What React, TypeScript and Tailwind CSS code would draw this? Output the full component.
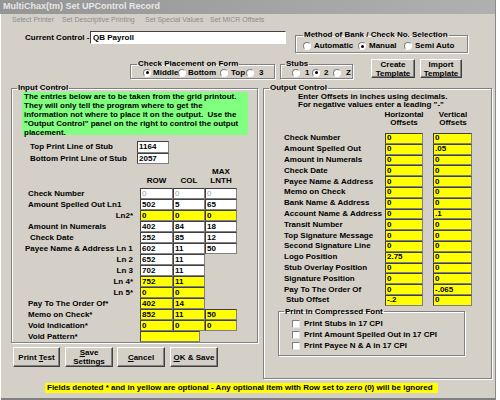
import React from "react";

const fs =
  "border border-[#808080] shadow-[inset_1px_1px_0_#ffffff,1px_1px_0_#ffffff] min-w-0 p-0";
const lg = "px-[1px] text-[8px] leading-[10px] font-bold";
const btn =
  "flex flex-col items-center justify-center bg-[#d4d0c8] border border-t-white border-l-white border-r-[#404040] border-b-[#404040] shadow-[inset_-1px_-1px_0_#808080] text-[8px] leading-[9px] font-bold text-black";

function Radio({ on }: { on?: boolean }) {
  return (
    <span className="flex h-[8px] w-[8px] shrink-0 items-center justify-center rounded-full border border-t-[#808080] border-l-[#808080] border-r-white border-b-white bg-white">
      {on && <span className="h-[3px] w-[3px] rounded-full bg-black" />}
    </span>
  );
}

function Box({ v, w, y, gray }: { v: string; w: string; y?: boolean; gray?: boolean }) {
  return (
    <div
      className={`h-full ${w} ${y ? "bg-[#ffff00]" : "bg-white"} border border-t-[#404040] border-l-[#404040] border-r-[#808080] border-b-[#808080] pl-[1px] flex items-center overflow-hidden text-[8px] ${
        gray ? "text-[#a0a0a0] font-normal" : "text-black font-bold"
      }`}
    >
      {v}
    </div>
  );
}

type InRow = { l: string; v: string[]; r?: boolean; y?: boolean; gray?: boolean; pl?: string };

const inRows: InRow[] = [
  { l: "Check Number", v: ["0", "0", "0"], gray: true },
  { l: "Amount Spelled Out Ln1", v: ["502", "5", "65"] },
  { l: "Ln2*", r: true, y: true, v: ["0", "0", "0"] },
  { l: "Amount in Numerals", v: ["402", "84", "18"] },
  { l: "Check Date", v: ["252", "85", "12"], pl: "pl-[18px]" },
  { l: "Payee Name & Address Ln 1", v: ["602", "11", "50"], pl: "pl-[13px]" },
  { l: "Ln 2", r: true, v: ["652", "11"] },
  { l: "Ln 3", r: true, v: ["702", "11"] },
  { l: "Ln 4*", r: true, y: true, v: ["752", "11"] },
  { l: "Ln 5*", r: true, y: true, v: ["0", "0"] },
  { l: "Pay To The Order Of*", y: true, v: ["402", "14"] },
  { l: "Memo on Check*", y: true, v: ["852", "11", "50"] },
  { l: "Void Indication*", y: true, v: ["0", "0", "0"] },
];

const colW = ["w-[33px]", "w-[32px]", "w-[32px]"];

const outRows: [string, string, string][] = [
  ["Check Number", "0", "0"],
  ["Amount Spelled Out", "0", ".05"],
  ["Amount in Numerals", "0", "0"],
  ["Check Date", "0", "0"],
  ["Payee Name & Address", "0", "0"],
  ["Memo on Check", "0", "0"],
  ["Bank Name & Address", "0", "0"],
  ["Account Name & Address", "0", ".1"],
  ["Transit Number", "0", "0"],
  ["Top Signature Message", "0", "0"],
  ["Second Signature Line", "0", "0"],
  ["Logo Position", "2.75", "0"],
  ["Stub Overlay Position", "0", "0"],
  ["Signature Position", "0", "0"],
  ["Pay To The Order Of", "0", "-.065"],
  ["Stub Offset", "-.2", "0"],
];

export default function App() {
  return (
    <div className="w-[500px] h-[400px] bg-[#d4d0c8] font-['Liberation_Sans',Arial,sans-serif] text-black text-[8px] overflow-hidden flex flex-col shadow-[inset_-4px_0_0_#ffffff,inset_-5px_0_0_#8a8a8a,inset_1px_0_0_#ffffff,inset_0_-2px_0_#808080]">
      {/* title */}
      <div className="h-[14px] bg-linear-to-r from-[#959595] to-[#b0b0b0] flex items-center pl-[3px] text-[9px] font-bold text-[#e8e8e8] mr-[5px]">
        MultiChax(tm) Set UPControl Record
      </div>
      {/* menu */}
      <div className="h-[13px] flex items-center pl-[12px] text-[7px] text-[#8c8c8c] whitespace-nowrap">
        <span className="w-[50px] shrink-0">Select Printer</span>
        <span className="w-[83px] shrink-0">Set Descriptive Printing</span>
        <span className="w-[65px] shrink-0">Set Special Values</span>
        <span>Set MICR Offsets</span>
      </div>

      {/* current control + method */}
      <div className="h-[30px] flex items-start">
        <div className="flex items-center mt-[4px] h-[13px] ml-[25px]">
          <span className="w-[65px] font-bold">Current Control -</span>
          <div className="w-[196px] h-[13px] bg-white border border-t-[#404040] border-l-[#404040] border-r-white border-b-white flex items-center pl-[2px] font-bold">
            QB Payroll
          </div>
        </div>
        <fieldset className={`${fs} ml-[9px] mt-[3px] w-[173px] h-[23px]`}>
          <legend className={`${lg} ml-[7px]`}>Method of Bank / Check No. Selection</legend>
          <div className="flex items-center h-[12px] font-bold">
            <div className="flex items-center gap-[3px] ml-[7px] w-[55px]">
              <Radio />
              <span>Automatic</span>
            </div>
            <div className="flex items-center gap-[3px] w-[46px]">
              <Radio on />
              <span>Manual</span>
            </div>
            <div className="flex items-center gap-[3px]">
              <Radio />
              <span>Semi Auto</span>
            </div>
          </div>
        </fieldset>
      </div>

      {/* placement + stubs + template buttons */}
      <div className="h-[26px] flex items-start">
        <fieldset className={`${fs} ml-[130px] mt-[2px] w-[145px] h-[20px]`}>
          <legend className={`${lg} ml-[6px]`}>Check Placement on Form</legend>
          <div className="flex items-center h-[9px] -mt-[1px] font-bold">
            <div className="flex items-center gap-[2px] ml-[12px] w-[35px]">
              <Radio on />
              <span>Middle</span>
            </div>
            <div className="flex items-center gap-[2px] w-[42px]">
              <Radio />
              <span>Bottom</span>
            </div>
            <div className="flex items-center gap-[3px] w-[26px]">
              <Radio />
              <span>Top</span>
            </div>
            <div className="flex items-center gap-[5px]">
              <Radio />
              <span>3</span>
            </div>
          </div>
        </fieldset>
        <fieldset className={`${fs} ml-[5px] mt-[2px] w-[73px] h-[20px]`}>
          <legend className={`${lg} ml-[4px]`}>Stubs</legend>
          <div className="flex items-center h-[9px] -mt-[1px] font-bold">
            <div className="flex items-center gap-[5px] ml-[11px] w-[20px]">
              <Radio />
              <span>1</span>
            </div>
            <div className="flex items-center gap-[4px] w-[21px]">
              <Radio on />
              <span>2</span>
            </div>
            <div className="flex items-center gap-[5px]">
              <Radio />
              <span>Z</span>
            </div>
          </div>
        </fieldset>
        <div className={`${btn} ml-[18px] mt-[2px] w-[44px] h-[19px]`}>
          <span>Create</span>
          <span>Template</span>
        </div>
        <div className={`${btn} ml-[5px] mt-[2px] w-[42px] h-[19px]`}>
          <span>Import</span>
          <span>Template</span>
        </div>
      </div>

      {/* main panels */}
      <div className="h-[296px] flex items-start">
        <div className="ml-[11px] w-[247px] flex flex-col">
          <fieldset className={`${fs} h-[260px]`}>
            <legend className={`${lg} ml-[5px]`}>Input Control</legend>
            <div className="ml-[10px] -mt-[1px] w-[226px] h-[43px] bg-[#80ff80] pl-[2px] text-[8px] leading-[9px] font-bold whitespace-nowrap">
              The entries below are to be taken from the grid printout.
              <br />
              They will only tell the program where to get the
              <br />
              information not where to place it on the output.&nbsp; Use the
              <br />
              "Output Control" panel on the right to control the output
              <br />
              placement.
            </div>
            <div className="mt-[6px] flex flex-col font-bold">
              <div className="flex h-[12px] items-center">
                <span className="w-[125px] pl-[18px]">Top Print Line of Stub</span>
                <Box v="1164" w="w-[32px]" />
              </div>
              <div className="flex h-[11px] items-center">
                <span className="w-[125px] pl-[18px]">Bottom Print Line of Stub</span>
                <Box v="2057" w="w-[32px]" />
              </div>
            </div>
            <div className="h-[24px] pt-[3px] flex flex-col font-bold leading-[9px]">
              <div className="flex">
                <span className="w-[193px]" />
                <span className="w-[32px] text-center">MAX</span>
              </div>
              <div className="flex">
                <span className="w-[128px]" />
                <span className="w-[33px] text-center">ROW</span>
                <span className="w-[32px] text-center">COL</span>
                <span className="w-[32px] text-center">LNTH</span>
              </div>
            </div>
            {inRows.map((r) => (
              <div key={r.l} className="flex h-[11px] items-center font-bold">
                <span className={`w-[128px] whitespace-nowrap ${r.r ? "text-right pr-[7px]" : r.pl ?? "pl-[16px]"}`}>
                  {r.l}
                </span>
                {r.v.map((v, i) => (
                  <Box key={i} v={v} w={colW[i]} y={r.y} gray={r.gray} />
                ))}
              </div>
            ))}
            <div className="flex h-[11px] items-center font-bold">
              <span className="w-[128px] pl-[16px]">Void Pattern*</span>
              <Box v="" w="w-[60px]" y />
            </div>
          </fieldset>
          <div className="mt-[4px] h-[20px] flex">
            <div className={`${btn} ml-[2px] w-[47px] h-[20px]`}>
              <span>
                Print <span className="underline">T</span>est
              </span>
            </div>
            <div className={`${btn} ml-[5px] w-[48px] h-[20px]`}>
              <span>
                <span className="underline">S</span>ave
              </span>
              <span>Settings</span>
            </div>
            <div className={`${btn} ml-[4px] w-[48px] h-[20px]`}>
              <span>
                <span className="underline">C</span>ancel
              </span>
            </div>
            <div className={`${btn} ml-[5px] w-[48px] h-[20px]`}>
              <span>
                <span className="underline">O</span>K &amp; Save
              </span>
            </div>
          </div>
        </div>

        <fieldset className={`${fs} ml-[5px] w-[229px] h-[296px]`}>
          <legend className={`${lg} ml-[5px]`}>Output Control</legend>
          <div className="pl-[34px] leading-[8px] font-bold whitespace-nowrap">
            <div>Enter Offsets in inches using decimals.</div>
            <div>For negative values enter a leading "-"</div>
          </div>
          <div className="mt-[2px] flex font-bold leading-[8px]">
            <span className="w-[115px]" />
            <span className="w-[50px] text-center">
              Horizontal
              <br />
              Offsets
            </span>
            <span className="w-[48px] text-center">
              Vertical
              <br />
              Offsets
            </span>
          </div>
          <div className="mt-[6px] flex flex-col">
            {outRows.map(([l, h, v]) => (
              <div key={l} className="flex h-[10.8px] items-center font-bold">
                <span className={`w-[121px] whitespace-nowrap ${l === "Stub Offset" ? "pl-[22px]" : "pl-[20px]"}`}>
                  {l}
                </span>
                <Box v={h} w="w-[38px]" y />
                <span className="w-[10px]" />
                <Box v={v} w="w-[39px]" y />
              </div>
            ))}
          </div>
          <fieldset className={`${fs} ml-[14px] mt-[1px] w-[187px] h-[49px]`}>
            <legend className={`${lg} ml-[5px]`}>Print in Compressed Font</legend>
            <div className="pt-[2px] flex flex-col font-bold">
              {["Print Stubs in 17 CPI", "Print Amount Spelled Out in 17 CPI", "Print Payee N & A in 17 CPI"].map((t) => (
                <div key={t} className="flex h-[11px] items-center gap-[4px] pl-[13px]">
                  <span className="h-[8px] w-[8px] bg-white border border-t-[#808080] border-l-[#808080] border-r-[#e8e8e8] border-b-[#e8e8e8]" />
                  <span>{t}</span>
                </div>
              ))}
            </div>
          </fieldset>
        </fieldset>
      </div>

      {/* note */}
      <div className="mt-[4px] ml-[45px] w-[393px] h-[10px] bg-[#ffff00] flex items-center pl-[2px] font-bold whitespace-nowrap">
        Fields denoted * and in yellow are optional - Any optional item with Row set to zero (0) will be ignored
      </div>
    </div>
  );
}
